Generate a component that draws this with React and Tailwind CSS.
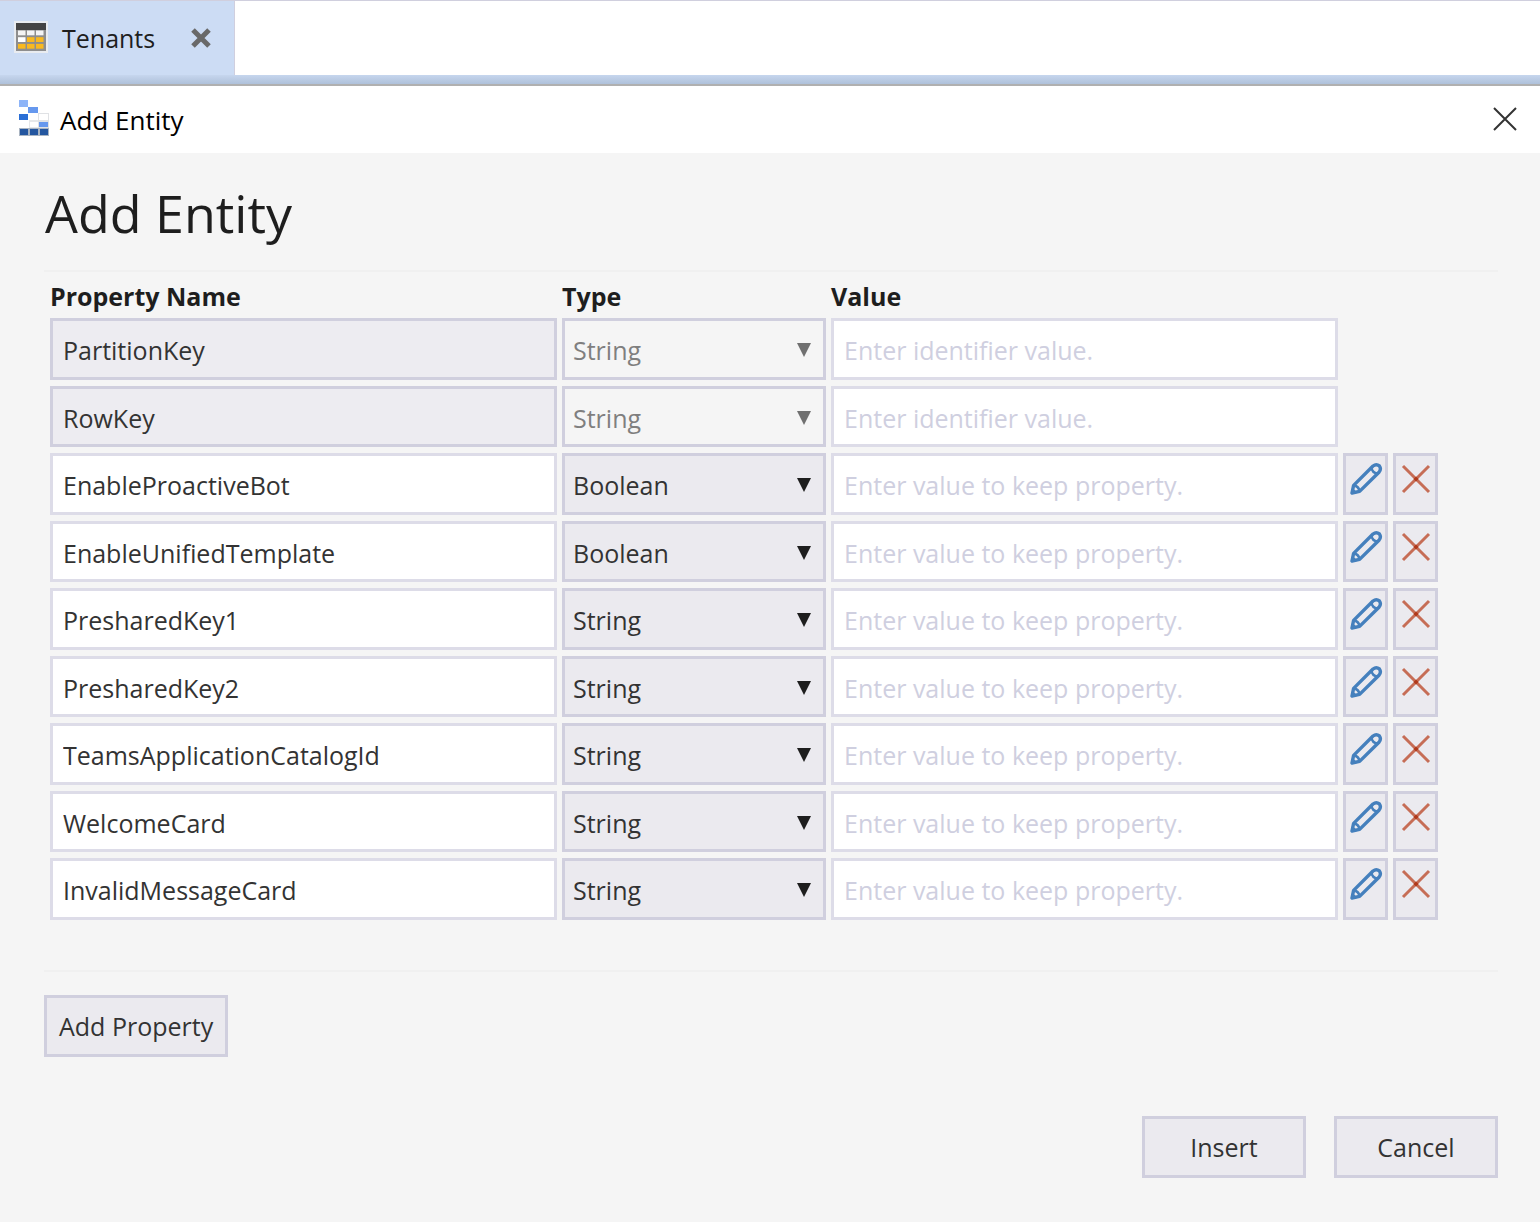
import React from "react";

const rows = [
  { name: "PartitionKey", type: "String", fixed: true },
  { name: "RowKey", type: "String", fixed: true },
  { name: "EnableProactiveBot", type: "Boolean" },
  { name: "EnableUnifiedTemplate", type: "Boolean" },
  { name: "PresharedKey1", type: "String" },
  { name: "PresharedKey2", type: "String" },
  { name: "TeamsApplicationCatalogId", type: "String" },
  { name: "WelcomeCard", type: "String" },
  { name: "InvalidMessageCard", type: "String" },
];

const types = ["String", "Boolean", "Binary", "DateTime", "Double", "Guid", "Int32", "Int64"];

function TableIcon() {
  const cells = [
    [0, 0, "#f4f4f4"], [1, 0, "#f4f4f4"], [2, 0, "#f4f4f4"],
    [0, 1, "#ffffff"], [1, 1, "#f9b91f"], [2, 1, "#f9b91f"],
    [0, 2, "#f9b91f"], [1, 2, "#f9b91f"], [2, 2, "#f9b91f"],
  ];
  return (
    <svg width="34" height="32" viewBox="0 0 34 32" aria-hidden="true">
      <rect width="34" height="32" fill="#e9ecf0" />
      <rect x="2" y="2" width="30" height="28" fill="#8e8e8e" />
      <rect x="2" y="2" width="30" height="7" fill="#444444" />
      {cells.map(([c, r, fill]) => (
        <rect key={`${c}${r}`} x={4 + c * 9} y={9.5 + r * 6.7} width="7.5" height="4.8" fill={fill} />
      ))}
    </svg>
  );
}

function StorageIcon() {
  return (
    <svg width="32" height="36" viewBox="0 0 32 36" aria-hidden="true">
      <rect x="1" y="28" width="30" height="8" fill="#a9b4c2" />
      <rect x="11" y="14" width="10" height="14" fill="#e6e8ea" />
      <rect x="20" y="13" width="11" height="15" fill="#e0e2e5" />
      <rect x="1" y="0" width="9" height="7" fill="#8db4f8" />
      <rect x="10" y="7" width="10" height="6" fill="#6698ee" />
      <rect x="1" y="14" width="9" height="6" fill="#2b6fd6" />
      <rect x="11" y="14" width="9" height="6" fill="#ffffff" />
      <rect x="21" y="14" width="9" height="6" fill="#ffffff" />
      <rect x="12" y="22" width="8" height="5" fill="#ffffff" />
      <rect x="21" y="22" width="9" height="5" fill="#6698ee" />
      <rect x="2" y="29" width="8" height="6" fill="#24569f" />
      <rect x="12" y="29" width="8" height="6" fill="#24569f" />
      <rect x="22" y="29" width="8" height="6" fill="#24569f" />
    </svg>
  );
}

function PencilIcon() {
  return (
    <svg width="34" height="34" viewBox="0 0 34 34" fill="none" stroke="#4580bd" strokeWidth="3.4" strokeLinejoin="round" aria-hidden="true">
      <path d="M3 31 L4.6 23.4 L24 4 Q27.3 1.4 30.4 3.9 Q32.6 7 30 10.2 L10.6 29.4 Z" />
      <path d="M4.6 23.4 Q9.8 24.2 10.6 29.4" strokeWidth="2.6" />
      <path d="M22.4 5.6 Q23.2 10.8 28.4 11.6" strokeWidth="2.6" />
      <path d="M2.5 31.5 L3.6 27 L7 30.4 Z" fill="#4580bd" strokeWidth="1.5" />
    </svg>
  );
}

function DeleteIcon() {
  return (
    <svg width="30" height="30" viewBox="0 0 30 30" fill="none" aria-hidden="true">
      <path d="M2 2 L28 28 M28 2 L2 28" stroke="#c66d56" strokeWidth="3" />
      <path d="M15 12.5 L17.5 15 L15 17.5 L12.5 15 Z" fill="#b0381a" />
    </svg>
  );
}

function PropertyRow({ row, height }) {
  const nameStyle = row.fixed ? "border-[#d0cfde] bg-[#edecf1]" : "border-[#dddce8] bg-white";
  const typeStyle = row.fixed ? "bg-[#f5f5f5] text-[#7f7f7f]" : "bg-[#ebeaef] text-[#333333]";
  return (
    <tr>
      <td className="p-0 align-top">
        <input
          aria-label={`${row.name} name`}
          defaultValue={row.name}
          readOnly={row.fixed}
          className={`block w-full border-3 px-2.5 pt-0.5 text-[#333333] outline-none ${height} ${nameStyle}`}
        />
      </td>
      <td className="p-0 align-top">
        <div className="relative">
          <select
            aria-label={`${row.name} type`}
            defaultValue={row.type}
            disabled={row.fixed}
            className={`block w-full appearance-none border-3 border-[#d0cfde] px-2 pt-0.5 opacity-100 outline-none ${height} ${typeStyle}`}
          >
            {types.map((t) => (
              <option key={t}>{t}</option>
            ))}
          </select>
          <svg
            className={`pointer-events-none absolute top-6 right-3.5 ${row.fixed ? "text-[#707070]" : "text-[#1e1e1e]"}`}
            width="15"
            height="15"
            viewBox="0 0 15 15"
            fill="currentColor"
            aria-hidden="true"
          >
            <path d="M0 1 H14 L7 15 Z" />
          </svg>
        </div>
      </td>
      <td className="p-0 align-top">
        <input
          aria-label={`${row.name} value`}
          placeholder={row.fixed ? "Enter identifier value." : "Enter value to keep property."}
          className={`block w-full border-3 border-[#dddce8] bg-white px-2.5 pt-0.5 text-[#333333] outline-none placeholder:text-[#cfcfe0] ${height}`}
        />
      </td>
      {!row.fixed && (
        <>
          <td className="p-0 align-top">
            <button
              aria-label={`Edit ${row.name}`}
              className={`flex w-full items-start justify-center border-3 border-[#d0cfde] bg-[#ebeaef] pt-1.5 ${height}`}
            >
              <PencilIcon />
            </button>
          </td>
          <td className="p-0 align-top">
            <button
              aria-label={`Delete ${row.name}`}
              className={`flex w-full items-start justify-center border-3 border-[#d0cfde] bg-[#ebeaef] pt-2 ${height}`}
            >
              <DeleteIcon />
            </button>
          </td>
        </>
      )}
    </tr>
  );
}

export default function App() {
  return (
    <div className="flex min-h-screen flex-col bg-[#f5f5f5] font-['Open_Sans',sans-serif] text-[25px] leading-8 text-[#1e1e1e]">
      <div className="flex h-[75px] border-t border-[#d0cfde] bg-white">
        <div className="flex items-center border-r border-[#d0cfde] bg-[#ccdcf4] pl-3.5 pr-[22px]">
          <div className="pb-0.5">
            <TableIcon />
          </div>
          <span className="ml-3.5 w-32">Tenants</span>
          <button aria-label="Close Tenants">
            <svg width="22" height="22" viewBox="0 0 22 22" stroke="#696969" strokeWidth="5" aria-hidden="true">
              <path d="M3 3 L19 19 M19 3 L3 19" />
            </svg>
          </button>
        </div>
      </div>
      <div className="h-[11px] border-b-2 border-[#b0b0b0] bg-linear-to-b from-[#c6d6ee] to-[#afc1da]" />

      <header className="flex h-[67px] items-center bg-white pl-[18px] pr-[22px] text-[26px] text-black">
        <div className="pb-1">
          <StorageIcon />
        </div>
        <span className="ml-2.5 flex-1">Add Entity</span>
        <button aria-label="Close" className="pb-0.5">
          <svg width="26" height="26" viewBox="0 0 26 26" stroke="#333333" strokeWidth="2" aria-hidden="true">
            <path d="M2 2 L24 24 M24 2 L2 24" />
          </svg>
        </button>
      </header>

      <main className="pl-11 pr-[42px]">
        <h1 className="pt-7 pb-[25px] pl-px text-[52px] leading-[64px]">Add Entity</h1>
        <div className="border-y-2 border-[#f0f0f0] pb-11">
          <div className="pl-px pr-[55px]">
            <table className="w-full table-fixed border-separate border-spacing-x-[5px] border-spacing-y-[6px]">
              <colgroup>
                <col />
                <col className="w-[264px]" />
                <col />
                <col className="w-[45px]" />
                <col className="w-[45px]" />
              </colgroup>
              <thead>
                <tr className="h-[34px] text-left">
                  <th className="p-0 pt-0.5 font-bold">Property Name</th>
                  <th className="p-0 pt-0.5 font-bold">Type</th>
                  <th className="p-0 pt-0.5 font-bold">Value</th>
                </tr>
              </thead>
              <tbody>
                {rows.map((row, i) => (
                  <PropertyRow key={row.name} row={row} height={i % 2 ? "h-[61px]" : "h-[62px]"} />
                ))}
              </tbody>
            </table>
          </div>
        </div>
        <button className="mt-[23px] h-[62px] border-3 border-[#d0cfde] bg-[#ebeaef] px-3 text-[#333333]">Add Property</button>
        <div className="mt-[59px] flex justify-end gap-7 pb-11">
          <button className="h-[62px] w-[164px] border-3 border-[#d0cfde] bg-[#ebeaef] text-[#333333]">Insert</button>
          <button className="h-[62px] w-[164px] border-3 border-[#d0cfde] bg-[#ebeaef] text-[#333333]">Cancel</button>
        </div>
      </main>
    </div>
  );
}
